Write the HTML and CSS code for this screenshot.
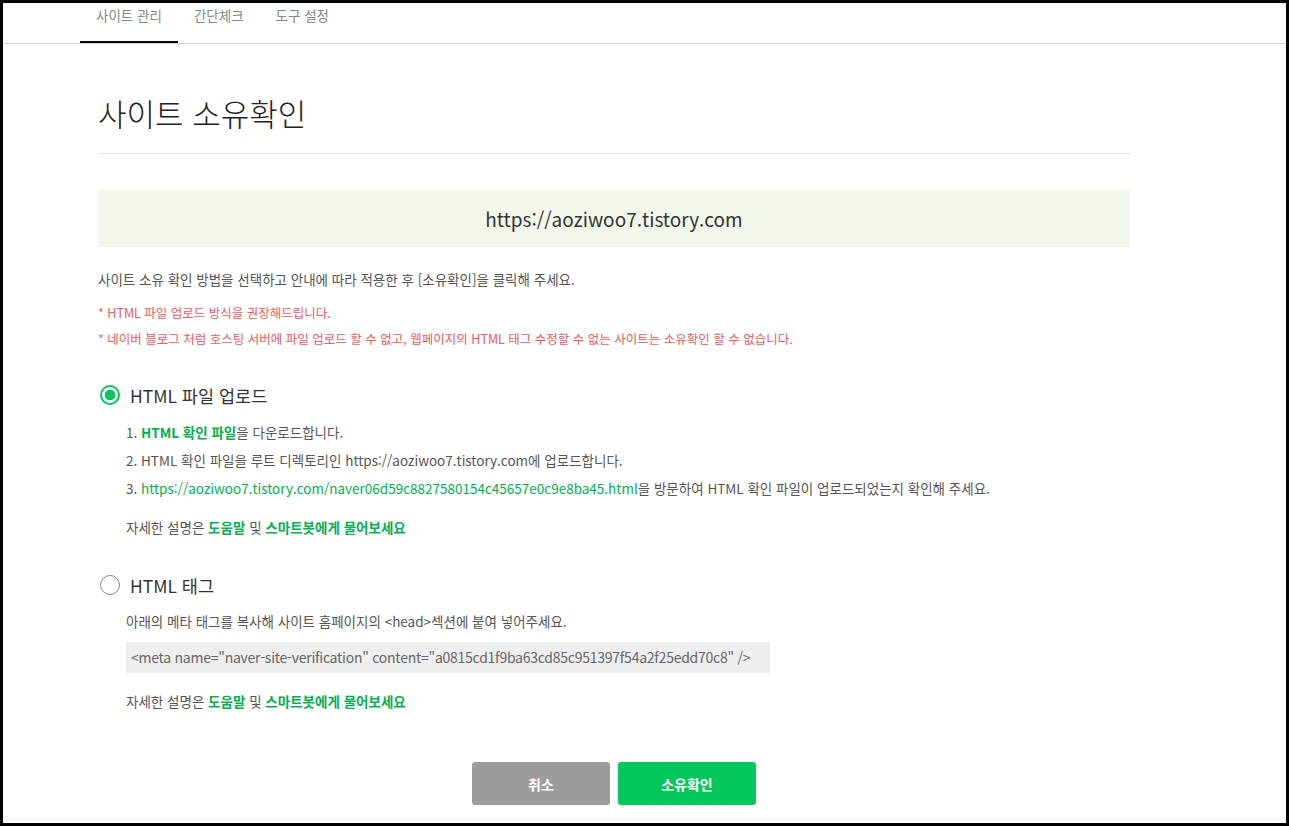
FILE: index.html
```html
<!DOCTYPE html>
<html lang="ko">
<head>
  <meta charset="UTF-8" />
  <meta name="viewport" content="width=device-width, initial-scale=1.0" />
  <title>사이트 소유확인</title>
  <link rel="stylesheet" href="styles.css">
</head>
<body>
  <div class="frame">
    <nav class="tabs">
      <a class="tab active">사이트 관리</a>
      <a class="tab">간단체크</a>
      <a class="tab">도구 설정</a>
    </nav>

    <div class="content">
      <h1 class="title">사이트 소유확인</h1>

      <div class="site-url">https://aoziwoo7.tistory.com</div>

      <p class="guide">사이트 소유 확인 방법을 선택하고 안내에 따라 적용한 후 [소유확인]을 클릭해 주세요.</p>
      <ul class="notice">
        <li>* HTML 파일 업로드 방식을 권장해드립니다.</li>
        <li>* 네이버 블로그 처럼 호스팅 서버에 파일 업로드 할 수 없고, 웹페이지의 HTML 태그 수정할 수 없는 사이트는 소유확인 할 수 없습니다.</li>
      </ul>

      <div class="method">
        <label class="radio checked"><span class="dot"></span>HTML 파일 업로드</label>
        <ol class="steps">
          <li>1. <a class="link">HTML 확인 파일</a>을 다운로드합니다.</li>
          <li>2. HTML 확인 파일을 루트 디렉토리인 https://aoziwoo7.tistory.com에 업로드합니다.</li>
          <li>3. <a class="link thin">https://aoziwoo7.tistory.com/naver06d59c8827580154c45657e0c9e8ba45.html</a>을 방문하여 HTML 확인 파일이 업로드되었는지 확인해 주세요.</li>
        </ol>
        <p class="help">자세한 설명은 <a class="link">도움말</a> 및 <a class="link">스마트봇에게 물어보세요</a></p>
      </div>

      <div class="method second">
        <label class="radio"><span class="dot"></span>HTML 태그</label>
        <p class="desc">아래의 메타 태그를 복사해 사이트 홈페이지의 &lt;head&gt;섹션에 붙여 넣어주세요.</p>
        <div class="code">&lt;meta name="naver-site-verification" content="a0815cd1f9ba63cd85c951397f54a2f25edd70c8" /&gt;</div>
        <p class="help">자세한 설명은 <a class="link">도움말</a> 및 <a class="link">스마트봇에게 물어보세요</a></p>
      </div>

      <div class="buttons">
        <button class="btn cancel">취소</button>
        <button class="btn confirm">소유확인</button>
      </div>
    </div>
  </div>
</body>
</html>
```

FILE: styles.css
```css
body {
  margin: 0;
  font-family: "Noto Sans CJK KR", "Noto Sans", sans-serif;
  background: #ffffff;
  color: #333;
}

.frame {
  box-sizing: border-box;
  height: 826px;
  border: 3px solid #000;
  overflow: hidden;
}

.tabs {
  display: flex;
  height: 40px;
  padding-left: 77px;
  border-bottom: 1px solid #cfcfcf;
}

.tab {
  box-sizing: border-box;
  height: 40px;
  padding: 2px 16px 0;
  font-size: 13.5px;
  line-height: 20px;
  color: #888;
}

.tab.active {
  border-bottom: 2px solid #000;
}

.content {
  width: 1032px;
  margin-left: 95px;
}

.title {
  margin: 48px 0 0;
  padding-bottom: 19px;
  border-bottom: 1px solid #e2e2e2;
  font-size: 31px;
  line-height: 42px;
  font-weight: 300;
  color: #222;
}

.site-url {
  margin-top: 36px;
  height: 57px;
  line-height: 57px;
  background: #f1f7ea;
  text-align: center;
  font-size: 19px;
  color: #333;
}

.guide {
  margin: 22px 0 0;
  font-size: 13.5px;
  line-height: 20px;
  color: #555;
}

.notice {
  list-style: none;
  margin: 11px 0 0;
  padding: 0;
  font-size: 12.5px;
  line-height: 26px;
  color: #ef5a5a;
}

.method {
  margin-top: 31px;
}

.method.second {
  margin-top: 32px;
}

.radio {
  display: flex;
  align-items: center;
  gap: 10px;
  height: 24px;
  font-size: 17.5px;
  color: #333;
}

.radio .dot {
  box-sizing: border-box;
  width: 20px;
  height: 20px;
  margin-left: 2px;
  border: 1.5px solid #888;
  border-radius: 50%;
}

.radio.checked .dot {
  border: 2px solid #03c75a;
  background: radial-gradient(circle, #03c75a 0 5px, #fff 5.5px);
}

.steps {
  list-style: none;
  margin: 11px 0 0;
  padding: 0 0 0 28px;
  font-size: 13.5px;
  line-height: 28px;
  color: #555;
}

.link {
  color: #03b050;
  font-weight: bold;
}

.link.thin {
  font-weight: normal;
}

.help {
  margin: 11px 0 0;
  padding-left: 28px;
  font-size: 13.5px;
  line-height: 28px;
  color: #555;
}

.second .help {
  margin-top: 14px;
}

.desc {
  margin: 10px 0 0;
  padding-left: 28px;
  font-size: 13.5px;
  line-height: 28px;
  color: #555;
}

.code {
  width: 644px;
  box-sizing: border-box;
  margin: 7px 0 0 28px;
  height: 31px;
  line-height: 31px;
  padding-left: 5px;
  background: #eeeeee;
  font-size: 14px;
  letter-spacing: -0.25px;
  white-space: nowrap;
  overflow: hidden;
  color: #666;
}

.buttons {
  display: flex;
  justify-content: center;
  gap: 8px;
  margin-top: 47px;
}

.btn {
  width: 138px;
  height: 43px;
  border: none;
  border-radius: 3px;
  font-family: inherit;
  font-size: 14px;
  font-weight: bold;
  color: #fff;
  cursor: pointer;
}

.btn.cancel {
  background: #9c9c9c;
}

.btn.confirm {
  background: #03c75a;
}
```
